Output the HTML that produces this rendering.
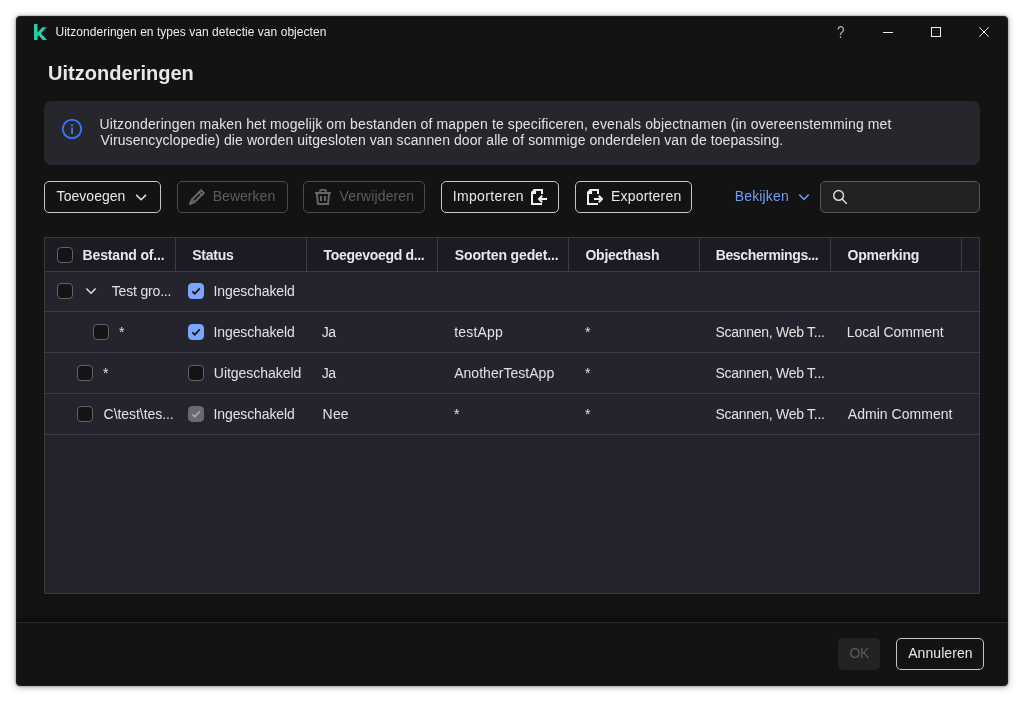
<!DOCTYPE html>
<html lang="nl">
<head>
<meta charset="utf-8">
<title>Uitzonderingen en types van detectie van objecten</title>
<style>
*{box-sizing:border-box;margin:0;padding:0}
html,body{width:1024px;height:702px;overflow:hidden;background:#fff}
body{font-family:"Liberation Sans",sans-serif;position:relative}
.a{position:absolute;display:block}
.t{position:absolute;white-space:nowrap}
.tx{position:absolute;left:0;top:0;width:1024px;height:702px;will-change:transform}
.win{left:16px;top:16px;width:992px;height:670px;background:#131313;border:1px solid #1c1c22;border-radius:4px;box-shadow:0 1px 7px rgba(0,0,0,.32),0 0 2px rgba(0,0,0,.5)}
.info{left:44px;top:101px;width:936px;height:64px;background:#26262d;border-radius:7px}
.btn{top:181px;height:32px;border:1px solid #c6c6c6;border-radius:5px}
.btn.dis{border-color:#4b4b4b}
.search{left:820px;top:181px;width:160px;height:32px;background:#222;border:1px solid #565656;border-radius:5px}
.table{left:44px;top:237px;width:936px;height:357px;background:#25242e;border:1px solid #3b3b3d}
.thead{left:45px;top:238px;width:934px;height:33px;background:#1b1b24}
.hl{left:45px;width:934px;height:1px;background:#3c3b46}
.vs{top:238px;width:1px;height:34px;background:#3c3b46}
.cb{width:16px;height:16px;border:1px solid #626268;border-radius:4px;background:#141414}
.cb.on{background:#7aa7fb;border-color:#7aa7fb}
.cb.gray{background:#69696f;border-color:#69696f}
.footsh{left:17px;top:613px;width:990px;height:9px;background:linear-gradient(to bottom,rgba(0,0,0,0),rgba(0,0,0,.4))}
.foot{left:17px;top:622px;width:990px;height:1px;background:#282828}
</style>
</head>
<body>
<div class="a win"></div>

<!-- title bar -->
<svg class="a" style="left:34px;top:24px" width="13" height="16" viewBox="0 0 13 16"><path d="M0 0h3.5v8.7L8.3 3.2h4.4L7.1 9.3l5.9 6.7H8.6L4.6 11.3l-1.1 1.2V16H0z" fill="#25cda8"/></svg>
<svg class="a" style="left:883px;top:32px" width="10" height="1"><rect width="10" height="1" fill="#f2f2f2"/></svg>
<svg class="a" style="left:931px;top:27px" width="10" height="10"><rect x=".5" y=".5" width="9" height="9" fill="none" stroke="#f2f2f2"/></svg>
<svg class="a" style="left:979px;top:27px" width="10" height="10"><path d="M.3.3l9.4 9.4M9.7.3L.3 9.7" stroke="#f2f2f2" stroke-width="1" fill="none"/></svg>

<!-- info box -->
<div class="a info"></div>
<svg class="a" style="left:62px;top:119px" width="20" height="20" viewBox="0 0 20 20"><circle cx="10" cy="10" r="9.2" fill="none" stroke="#3f70f4" stroke-width="1.9"/><rect x="9.1" y="8.5" width="1.9" height="6.5" fill="#3f70f4"/><rect x="9" y="5.1" width="2.1" height="2.1" fill="#3f70f4"/></svg>

<!-- toolbar -->
<div class="a btn" style="left:44px;width:117px"></div>
<svg class="a" style="left:135px;top:193px" width="12" height="8" viewBox="0 0 12 8"><path d="M1.2 1.9l4.9 4.8 4.9-4.8" stroke="#e4e4e4" stroke-width="1.5" fill="none"/></svg>
<div class="a btn dis" style="left:177px;width:111px"></div>
<svg class="a" style="left:189px;top:189px" width="16" height="16" viewBox="0 0 16 16"><g fill="none" stroke="#666" stroke-width="2.1" stroke-linejoin="round"><path d="M1 15L3 10.4 12.1 1.3 14.7 3.9 5.6 13z"/><path d="M3 10.4l2.6 2.6M10 3.4l2.6 2.6" stroke-width="1.6"/></g></svg>
<div class="a btn dis" style="left:303px;width:122px"></div>
<svg class="a" style="left:315px;top:189px" width="16" height="16" viewBox="0 0 16 16"><g fill="none" stroke="#666" stroke-width="2"><path d="M2 5l.9 10h10.2L14 5"/><path d="M0 4h16"/></g><path d="M5 3V2.2a1.3 1.3 0 0 1 1.3-1.3h3.4A1.3 1.3 0 0 1 11 2.2V3" fill="none" stroke="#666" stroke-width="1.8"/><rect x="5" y="7" width="2" height="5" fill="#666"/><rect x="9" y="7" width="2" height="5" fill="#666"/></svg>
<div class="a btn" style="left:441px;width:118px"></div>
<svg class="a" style="left:531px;top:189px" width="16" height="16" viewBox="0 0 16 16"><path d="M11 5V1H3.4L1 3.4V15h10" fill="none" stroke="#f0f0f0" stroke-width="2"/><path d="M1 3.4L3.4 1H5v4H1z" fill="#f0f0f0"/><path d="M16 10H8.6M11.2 6.8L8 10l3.2 3.2" fill="none" stroke="#f0f0f0" stroke-width="2"/></svg>
<div class="a btn" style="left:575px;width:117px"></div>
<svg class="a" style="left:587px;top:189px" width="16" height="16" viewBox="0 0 16 16"><path d="M11 5V1H3.4L1 3.4V15h10" fill="none" stroke="#f0f0f0" stroke-width="2"/><path d="M1 3.4L3.4 1H5v4H1z" fill="#f0f0f0"/><path d="M7 10h7.4M11.8 6.8L15 10l-3.2 3.2" fill="none" stroke="#f0f0f0" stroke-width="2"/></svg>
<svg class="a" style="left:798px;top:193px" width="12" height="8" viewBox="0 0 12 8"><path d="M1.3 1.6l4.7 4.8 4.7-4.8" stroke="#6f9ff7" stroke-width="1.5" fill="none"/></svg>
<div class="a search"></div>
<svg class="a" style="left:832px;top:189px" width="16" height="16" viewBox="0 0 16 16"><circle cx="6.6" cy="6.4" r="4.9" fill="none" stroke="#dcdcdc" stroke-width="1.5"/><path d="M10.1 10l4.6 4.7" stroke="#dcdcdc" stroke-width="1.5" fill="none"/></svg>

<!-- table -->
<div class="a table"></div>
<div class="a thead"></div>
<div class="a hl" style="top:271px"></div>
<div class="a hl" style="top:311px"></div>
<div class="a hl" style="top:352px"></div>
<div class="a hl" style="top:393px"></div>
<div class="a hl" style="top:434px"></div>
<div class="a vs" style="left:175px"></div>
<div class="a vs" style="left:306px"></div>
<div class="a vs" style="left:437px"></div>
<div class="a vs" style="left:568px"></div>
<div class="a vs" style="left:699px"></div>
<div class="a vs" style="left:830px"></div>
<div class="a vs" style="left:961px"></div>

<div class="a cb" style="left:57px;top:247px"></div>
<div class="a cb" style="left:57px;top:283px"></div>
<div class="a cb" style="left:93px;top:324px"></div>
<div class="a cb" style="left:77px;top:365px"></div>
<div class="a cb" style="left:77px;top:406px"></div>
<svg class="a" style="left:85px;top:287px" width="12" height="8" viewBox="0 0 12 8"><path d="M1.4 1.6l4.6 4.7 4.6-4.7" stroke="#e0e0e0" stroke-width="1.5" fill="none"/></svg>

<div class="a cb on" style="left:188px;top:283px"></div>
<svg class="a" style="left:188px;top:283px" width="16" height="16"><path d="M4.3 8.3l2.5 2.4 5-5.3" stroke="#161616" stroke-width="1.7" fill="none"/></svg>
<div class="a cb on" style="left:188px;top:324px"></div>
<svg class="a" style="left:188px;top:324px" width="16" height="16"><path d="M4.3 8.3l2.5 2.4 5-5.3" stroke="#161616" stroke-width="1.7" fill="none"/></svg>
<div class="a cb" style="left:188px;top:365px"></div>
<div class="a cb gray" style="left:188px;top:406px"></div>
<svg class="a" style="left:188px;top:406px" width="16" height="16"><path d="M4.3 8.3l2.5 2.4 5-5.3" stroke="#a2a2a8" stroke-width="1.7" fill="none"/></svg>

<!-- footer -->
<div class="a footsh"></div>
<div class="a foot"></div>
<div class="a" style="left:838px;top:638px;width:42px;height:32px;background:#232323;border-radius:5px"></div>
<div class="a btn" style="left:896px;top:638px;width:88px"></div>

<div class="tx">
<div class="t" style="left:55.45px;top:23.84px;font-size:12px;line-height:16px;letter-spacing:0.043px;color:#eeeeee">Uitzonderingen en types van detectie van objecten</div>
<div class="t" style="left:47.95px;top:61.07px;font-size:20px;line-height:24px;letter-spacing:0.027px;color:#e8e8e8;font-weight:bold">Uitzonderingen</div>
<div class="t" style="left:99.60px;top:116.15px;font-size:14px;line-height:16px;letter-spacing:0.124px;color:#e2e2e2">Uitzonderingen maken het mogelijk om bestanden of mappen te specificeren, evenals objectnamen (in overeenstemming met</div>
<div class="t" style="left:100.60px;top:132.15px;font-size:14px;line-height:16px;letter-spacing:0.078px;color:#e2e2e2">Virusencyclopedie) die worden uitgesloten van scannen door alle of sommige onderdelen van de toepassing.</div>
<div class="t" style="left:56.60px;top:188.15px;font-size:14px;line-height:16px;letter-spacing:0.038px;color:#e8e8e8">Toevoegen</div>
<div class="t" style="left:212.70px;top:188.15px;font-size:14px;line-height:16px;letter-spacing:0.036px;color:#5c5c5c">Bewerken</div>
<div class="t" style="left:339.60px;top:188.15px;font-size:14px;line-height:16px;letter-spacing:0.130px;color:#5c5c5c">Verwijderen</div>
<div class="t" style="left:452.70px;top:188.15px;font-size:14px;line-height:16px;letter-spacing:0.356px;color:#e8e8e8">Importeren</div>
<div class="t" style="left:611.10px;top:188.15px;font-size:14px;line-height:16px;letter-spacing:0.178px;color:#e8e8e8">Exporteren</div>
<div class="t" style="left:734.80px;top:188.15px;font-size:14px;line-height:16px;letter-spacing:0.143px;color:#6f9ff7">Bekijken</div>
<div class="t" style="left:82.60px;top:247.15px;font-size:14px;line-height:16px;letter-spacing:-0.167px;color:#e8e8e8;font-weight:bold">Bestand of...</div>
<div class="t" style="left:192.30px;top:247.15px;font-size:14px;line-height:16px;letter-spacing:-0.280px;color:#e8e8e8;font-weight:bold">Status</div>
<div class="t" style="left:323.60px;top:247.15px;font-size:14px;line-height:16px;letter-spacing:-0.314px;color:#e8e8e8;font-weight:bold">Toegevoegd d...</div>
<div class="t" style="left:454.80px;top:247.15px;font-size:14px;line-height:16px;letter-spacing:-0.123px;color:#e8e8e8;font-weight:bold">Soorten gedet...</div>
<div class="t" style="left:585.45px;top:247.15px;font-size:14px;line-height:16px;letter-spacing:-0.250px;color:#e8e8e8;font-weight:bold">Objecthash</div>
<div class="t" style="left:715.70px;top:247.15px;font-size:14px;line-height:16px;letter-spacing:-0.364px;color:#e8e8e8;font-weight:bold">Beschermings...</div>
<div class="t" style="left:847.60px;top:247.15px;font-size:14px;line-height:16px;letter-spacing:-0.275px;color:#e8e8e8;font-weight:bold">Opmerking</div>
<div class="t" style="left:111.70px;top:283.15px;font-size:14px;line-height:16px;letter-spacing:-0.170px;color:#e2e2e2">Test gro...</div>
<div class="t" style="left:213.60px;top:283.15px;font-size:14px;line-height:16px;letter-spacing:-0.127px;color:#e2e2e2">Ingeschakeld</div>
<div class="t" style="left:213.60px;top:324.15px;font-size:14px;line-height:16px;letter-spacing:-0.127px;color:#e2e2e2">Ingeschakeld</div>
<div class="t" style="left:321.68px;top:324.15px;font-size:14px;line-height:16px;letter-spacing:-0.350px;color:#e2e2e2">Ja</div>
<div class="t" style="left:454.20px;top:324.15px;font-size:14px;line-height:16px;letter-spacing:0.183px;color:#e2e2e2">testApp</div>
<div class="t" style="left:715.50px;top:324.15px;font-size:14px;line-height:16px;letter-spacing:-0.281px;color:#e2e2e2">Scannen, Web T...</div>
<div class="t" style="left:846.80px;top:324.15px;font-size:14px;line-height:16px;letter-spacing:-0.108px;color:#e2e2e2">Local Comment</div>
<div class="t" style="left:213.80px;top:365.15px;font-size:14px;line-height:16px;letter-spacing:-0.029px;color:#e2e2e2">Uitgeschakeld</div>
<div class="t" style="left:321.68px;top:365.15px;font-size:14px;line-height:16px;letter-spacing:-0.350px;color:#e2e2e2">Ja</div>
<div class="t" style="left:454.20px;top:365.15px;font-size:14px;line-height:16px;letter-spacing:0.031px;color:#e2e2e2">AnotherTestApp</div>
<div class="t" style="left:715.50px;top:365.15px;font-size:14px;line-height:16px;letter-spacing:-0.281px;color:#e2e2e2">Scannen, Web T...</div>
<div class="t" style="left:103.60px;top:406.15px;font-size:14px;line-height:16px;letter-spacing:-0.054px;color:#e2e2e2">C\test\tes...</div>
<div class="t" style="left:213.60px;top:406.15px;font-size:14px;line-height:16px;letter-spacing:-0.127px;color:#e2e2e2">Ingeschakeld</div>
<div class="t" style="left:322.60px;top:406.15px;font-size:14px;line-height:16px;letter-spacing:0.175px;color:#e2e2e2">Nee</div>
<div class="t" style="left:715.50px;top:406.15px;font-size:14px;line-height:16px;letter-spacing:-0.281px;color:#e2e2e2">Scannen, Web T...</div>
<div class="t" style="left:847.80px;top:406.15px;font-size:14px;line-height:16px;letter-spacing:0.033px;color:#e2e2e2">Admin Comment</div>
<div class="t" style="left:849.50px;top:645.15px;font-size:14px;line-height:16px;letter-spacing:-0.350px;color:#5c5c5c">OK</div>
<div class="t" style="left:908.20px;top:645.15px;font-size:14px;line-height:16px;letter-spacing:0.062px;color:#e8e8e8">Annuleren</div>
<div class="t" style="left:836.5px;top:25px;font-size:16px;line-height:16px;color:#b2b2b2;transform:scaleX(.84);transform-origin:0 0">?</div>
<div class="t" style="left:119px;top:324px;font-size:14px;line-height:16px;color:#e2e2e2">*</div>
<div class="t" style="left:103px;top:365px;font-size:14px;line-height:16px;color:#e2e2e2">*</div>
<div class="t" style="left:454px;top:406px;font-size:14px;line-height:16px;color:#e2e2e2">*</div>
<div class="t" style="left:585px;top:324px;font-size:14px;line-height:16px;color:#e2e2e2">*</div>
<div class="t" style="left:585px;top:365px;font-size:14px;line-height:16px;color:#e2e2e2">*</div>
<div class="t" style="left:585px;top:406px;font-size:14px;line-height:16px;color:#e2e2e2">*</div>
</div>
</body>
</html>
